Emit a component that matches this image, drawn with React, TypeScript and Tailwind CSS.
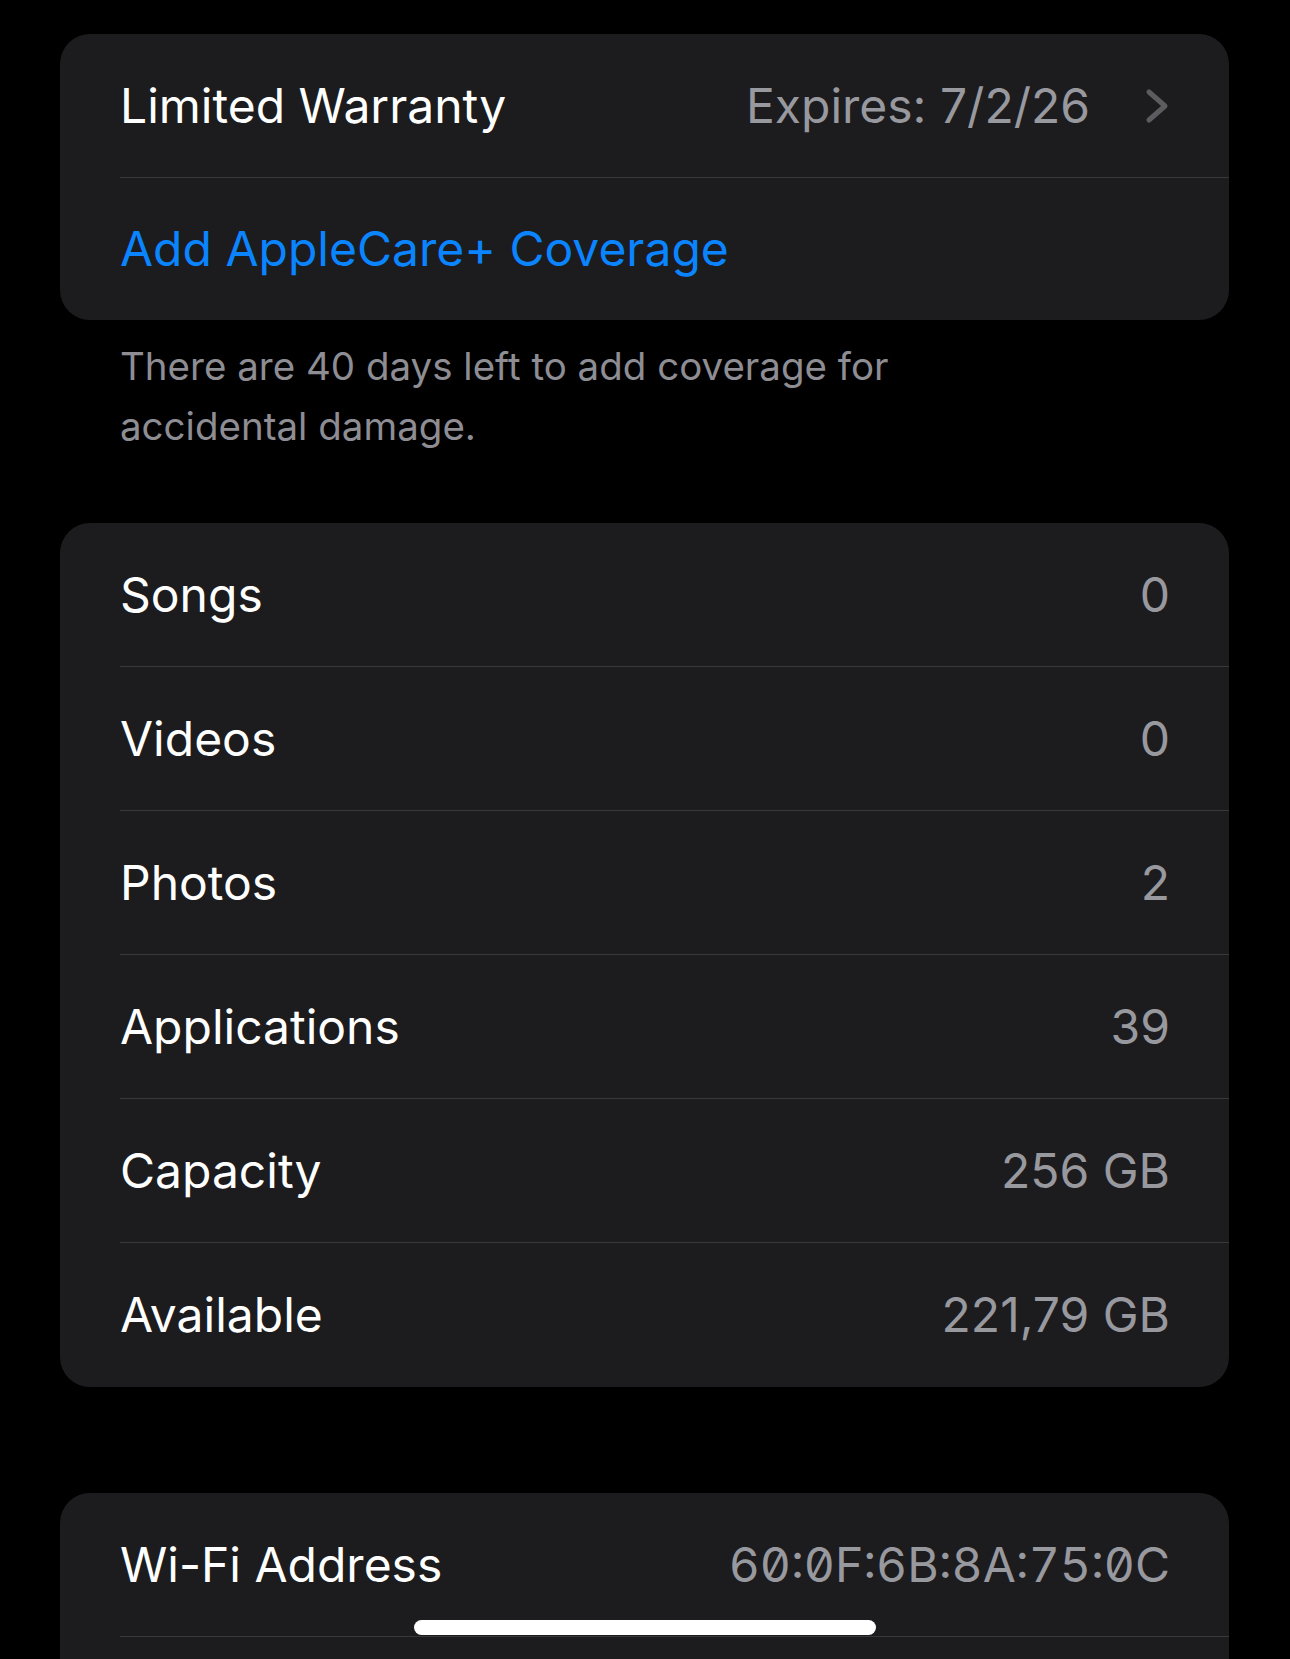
import React from "react";

type Row = { label: string; value: string; mono?: boolean };

const stats: Row[] = [
  { label: "Songs", value: "0" },
  { label: "Videos", value: "0" },
  { label: "Photos", value: "2" },
  { label: "Applications", value: "39" },
  { label: "Capacity", value: "256 GB" },
  { label: "Available", value: "221,79 GB" },
];

function Chevron() {
  return (
    <svg width="24" height="36" viewBox="0 0 24 36" fill="none" className="shrink-0">
      <polyline
        points="4,4 20,18 4,32"
        stroke="#5b5b60"
        strokeWidth="5"
        strokeLinecap="round"
        strokeLinejoin="round"
      />
    </svg>
  );
}

function InfoRow({ label, value, mono, last }: Row & { last?: boolean }) {
  return (
    <div className="pl-[60px]">
      <div
        className={
          "flex h-[144px] items-center justify-between pr-[59px] " +
          (last ? "" : "border-b border-[#38383a]")
        }
      >
        <span className="text-[48px] text-white">{label}</span>
        <span
          className={
            "text-[48px] text-[#98989f] " + (mono ? "slashed-zero tabular-nums" : "")
          }
        >
          {value}
        </span>
      </div>
    </div>
  );
}

export default function App() {
  return (
    <div className="relative min-h-[1659px] w-[1290px] overflow-hidden bg-black pl-[60px] pr-[61px] pt-[34px] font-['Inter',sans-serif]">
      {/* warranty */}
      <div className="overflow-hidden rounded-[30px] bg-[#1c1c1e]">
        <div className="pl-[60px]">
          <div className="flex h-[144px] items-center border-b border-[#38383a] pr-[60px]">
            <span className="flex-1 text-[48px] text-white">Limited Warranty</span>
            <span className="mr-[55px] text-[48px] text-[#98989f]">Expires: 7/2/26</span>
            <Chevron />
          </div>
        </div>
        <div className="flex h-[142px] items-center pl-[60px]">
          <span className="text-[48px] text-[#0a84ff]">Add AppleCare+ Coverage</span>
        </div>
      </div>

      <p className="mt-[16px] pl-[60px] text-[38.5px] leading-[60px] text-[#8d8d93]">
        There are 40 days left to add coverage for
        <br />
        accidental damage.
      </p>

      {/* stats */}
      <div className="mt-[67px] overflow-hidden rounded-[30px] bg-[#1c1c1e]">
        {stats.map((r, i) => (
          <InfoRow key={r.label} {...r} last={i === stats.length - 1} />
        ))}
      </div>

      {/* network */}
      <div className="mt-[106px] overflow-hidden rounded-t-[30px] bg-[#1c1c1e]">
        <InfoRow label="Wi-Fi Address" value="60:0F:6B:8A:75:0C" mono />
        <div className="h-[40px]" />
      </div>

      {/* home indicator */}
      <div className="absolute left-[414px] top-[1620px] h-[15px] w-[462px] rounded-full bg-white" />
    </div>
  );
}
